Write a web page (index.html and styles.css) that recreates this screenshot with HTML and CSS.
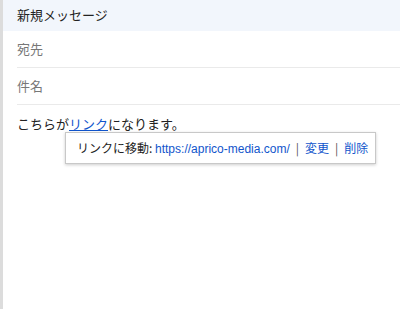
FILE: index.html
```html
<!DOCTYPE html>
<html>
<head>
    <meta name="viewport" content="width=device-width, initial-scale=1.0">
    <title>新規メッセージ</title>
    <link rel="stylesheet" href="styles.css">
</head>
<body>
    <div class="compose">
        <div class="compose-header">新規メッセージ</div>
        <div class="field">宛先</div>
        <div class="field">件名</div>
        <div class="body-text">
            こちらが<a class="link" href="#">リンク</a>になります。
            <div class="link-bubble">
                リンクに移動: <a href="#">https://aprico-media.com/</a><span class="sep">|</span><a href="#">変更</a><span class="sep">|</span><a href="#">削除</a>
            </div>
        </div>
    </div>
</body>
</html>
```

FILE: styles.css
```css
* {
    box-sizing: border-box;
    margin: 0;
    padding: 0;
}

body {
    width: 400px;
    height: 309px;
    overflow: hidden;
    background: #fff;
    font-family: 'Noto Sans CJK JP', 'Liberation Sans', sans-serif;
    font-size: 13px;
    color: #222;
}

.compose {
    height: 309px;
    border-left: 3px solid #dcdcdc;
}

.compose-header {
    height: 31px;
    line-height: 30px;
    padding-left: 14px;
    background: #f2f6fc;
    color: #222;
}

.field {
    margin-left: 14px;
    height: 37px;
    line-height: 36px;
    color: #777;
    border-bottom: 1px solid #eaeaea;
}

.body-text {
    position: relative;
    padding: 9px 0 0 14px;
    line-height: 20px;
}

.link {
    color: #1155cc;
}

.link-bubble {
    position: absolute;
    left: 62px;
    top: 27px;
    width: 311px;
    height: 32px;
    line-height: 30px;
    padding-left: 11px;
    background: #fff;
    border: 1px solid #c8c8c8;
    box-shadow: 0 1px 3px rgba(0, 0, 0, 0.2);
    font-size: 12px;
    white-space: nowrap;
}

.link-bubble a {
    color: #1155cc;
    text-decoration: none;
    font-family: 'Liberation Sans', 'Noto Sans CJK JP', sans-serif;
}

.link-bubble a:nth-of-type(n+2) {
    font-family: 'Noto Sans CJK JP', sans-serif;
}

.sep {
    color: #555;
    margin: 0 6px;
}
```
